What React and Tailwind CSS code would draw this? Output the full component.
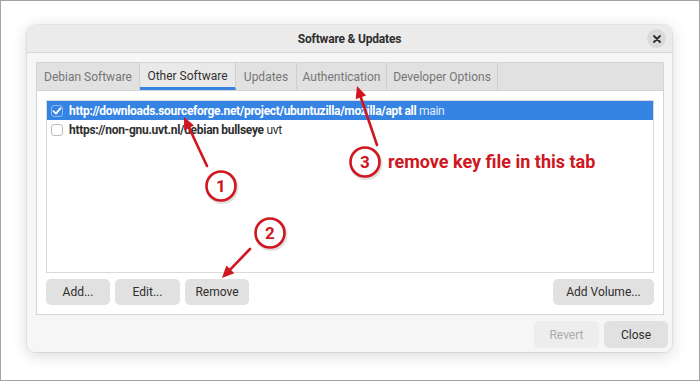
import React from "react";

const RED = "#d0161e";

function Arrow({ x1, y1, x2, y2 }) {
  const dx = x2 - x1;
  const dy = y2 - y1;
  const len = Math.sqrt(dx * dx + dy * dy);
  const ux = dx / len;
  const uy = dy / len;
  const hl = 12;
  const hw = 5.5;
  const bx = x2 - ux * hl;
  const by = y2 - uy * hl;
  const px = -uy;
  const py = ux;
  const pts = `${x2},${y2} ${bx + px * hw},${by + py * hw} ${bx - px * hw},${by - py * hw}`;
  return (
    <g>
      <line x1={x1} y1={y1} x2={bx + ux * 2} y2={by + uy * 2} stroke={RED} strokeWidth="2.6" strokeLinecap="round" />
      <polygon points={pts} fill={RED} />
    </g>
  );
}

function Num({ cx, cy, n }) {
  return (
    <g>
      <circle cx={cx + 1} cy={cy + 1.5} r="15" fill="none" stroke="rgba(0,0,0,0.12)" strokeWidth="3" />
      <circle cx={cx} cy={cy} r="14.5" fill="#ffffff" stroke={RED} strokeWidth="2.6" />
      <text x={cx} y={cy + 6} textAnchor="middle" fontFamily="Roboto, sans-serif" fontWeight="700" fontSize="17" fill={RED}>
        {n}
      </text>
    </g>
  );
}

function Check() {
  return (
    <svg width="10" height="10" viewBox="0 0 10 10">
      <path d="M1.5 5.2 L4 7.6 L8.6 2.2" fill="none" stroke="#ffffff" strokeWidth="1.8" strokeLinecap="round" strokeLinejoin="round" />
    </svg>
  );
}

function Btn({ children, w, disabled }) {
  return (
    <div
      className={`h-full flex items-center justify-center rounded-[5px] text-[12px] ${
        disabled ? "bg-[#eeedee] text-[#ababab]" : "bg-[#e1e1e1] text-[#2e2e2e]"
      }`}
      style={{ width: w }}
    >
      {children}
    </div>
  );
}

export default function App() {
  const tabs = [
    { label: "Debian Software", w: 103 },
    { label: "Other Software", w: 96, active: true },
    { label: "Updates", w: 61 },
    { label: "Authentication", w: 90 },
    { label: "Developer Options", w: 111 },
  ];
  return (
    <div className="relative w-[700px] h-[381px] bg-white shadow-[inset_0_0_0_1px_#a3a3a3] pt-[25px] pl-[27px] font-[Roboto,sans-serif] overflow-hidden">
      <div className="w-[645px] h-[327px] rounded-[8px] bg-[#f6f6f6] flex flex-col shadow-[0_3px_16px_rgba(0,0,0,0.16),0_0_0_1px_rgba(0,0,0,0.06)] overflow-hidden">
        {/* title bar */}
        <div className="relative h-[28px] shrink-0 bg-[#ebebeb] border-b border-[#d6d6d6] flex items-center justify-center">
          <span className="text-[12px] font-bold text-[#2e2e2e] tracking-[-0.2px]">Software &amp; Updates</span>
          <div className="absolute right-[6px] top-[4px] w-[19px] h-[19px] rounded-full bg-[#dadada] flex items-center justify-center">
            <svg width="8" height="8" viewBox="0 0 8 8">
              <path d="M1 1 L7 7 M7 1 L1 7" stroke="#2e2e2e" strokeWidth="1.8" strokeLinecap="round" />
            </svg>
          </div>
        </div>
        {/* body */}
        <div className="flex-1 flex flex-col pl-[9px] pr-[8px] pt-[9px]">
          <div className="h-[253px] border border-[#d5d5d5] bg-white flex flex-col">
            <div className="h-[28px] shrink-0 bg-[#e1e1e1] border-b border-[#d5d5d5] flex">
              {tabs.map((t) => (
                <div
                  key={t.label}
                  className={`h-full flex items-center justify-center border-r border-[#cfcfcf] text-[12px] ${
                    t.active
                      ? "bg-[#e9e9e9] text-[#333333] border-b-[3px] border-b-[#3584e4] pt-[2px]"
                      : "text-[#767676]"
                  }`}
                  style={{ width: t.w }}
                >
                  {t.label}
                </div>
              ))}
            </div>
            <div className="flex-1 flex flex-col pt-[9px] px-[9px] pb-[9px] gap-[6px]">
              <div className="flex-1 border border-[#dadada] bg-white flex flex-col">
                <div className="h-[19px] bg-[#3584e4] flex items-center pl-[4px] gap-[6px] text-[12px] text-white tracking-[-0.3px]">
                  <div className="w-[12px] h-[12px] rounded-[3px] border border-[#8fb8ee] flex items-center justify-center">
                    <Check />
                  </div>
                  <span>
                    <span className="font-bold">http://downloads.sourceforge.net/project/ubuntuzilla/mozilla/apt all</span>
                    <span className="text-[#e4eefc]"> main</span>
                  </span>
                </div>
                <div className="h-[19px] flex items-center pl-[4px] gap-[6px] text-[12px] text-[#2e2e2e] tracking-[-0.3px]">
                  <div className="w-[12px] h-[12px] rounded-[3px] border border-[#bdbdbd] bg-white" />
                  <span>
                    <span className="font-bold">https://non-gnu.uvt.nl/debian bullseye</span>
                    <span> uvt</span>
                  </span>
                </div>
              </div>
              <div className="h-[26px] shrink-0 flex gap-[5px]">
                <Btn w={64}>Add...</Btn>
                <Btn w={65}>Edit...</Btn>
                <Btn w={64}>Remove</Btn>
                <div className="flex-1" />
                <Btn w={101}>Add Volume...</Btn>
              </div>
            </div>
          </div>
          <div className="h-[27px] mt-[6px] -mr-[4px] flex justify-end gap-[5px]">
            <Btn w={65} disabled>Revert</Btn>
            <Btn w={64}>Close</Btn>
          </div>
        </div>
      </div>

      {/* annotations */}
      <svg className="absolute left-0 top-0 pointer-events-none" width="700" height="381" viewBox="0 0 700 381">
        <Arrow x1={207} y1={166} x2={184} y2={117} />
        <Arrow x1={250} y1={249} x2={222} y2={278} />
        <Arrow x1={377} y1={145} x2={357} y2={86} />
        <Num cx={221} cy={186} n="1" />
        <Num cx={270} cy={233} n="2" />
        <Num cx={365} cy={162} n="3" />
        <text x="388" y="168" fontFamily="Roboto, sans-serif" fontWeight="700" fontSize="18" fill={RED}>
          remove key file in this tab
        </text>
      </svg>
    </div>
  );
}
